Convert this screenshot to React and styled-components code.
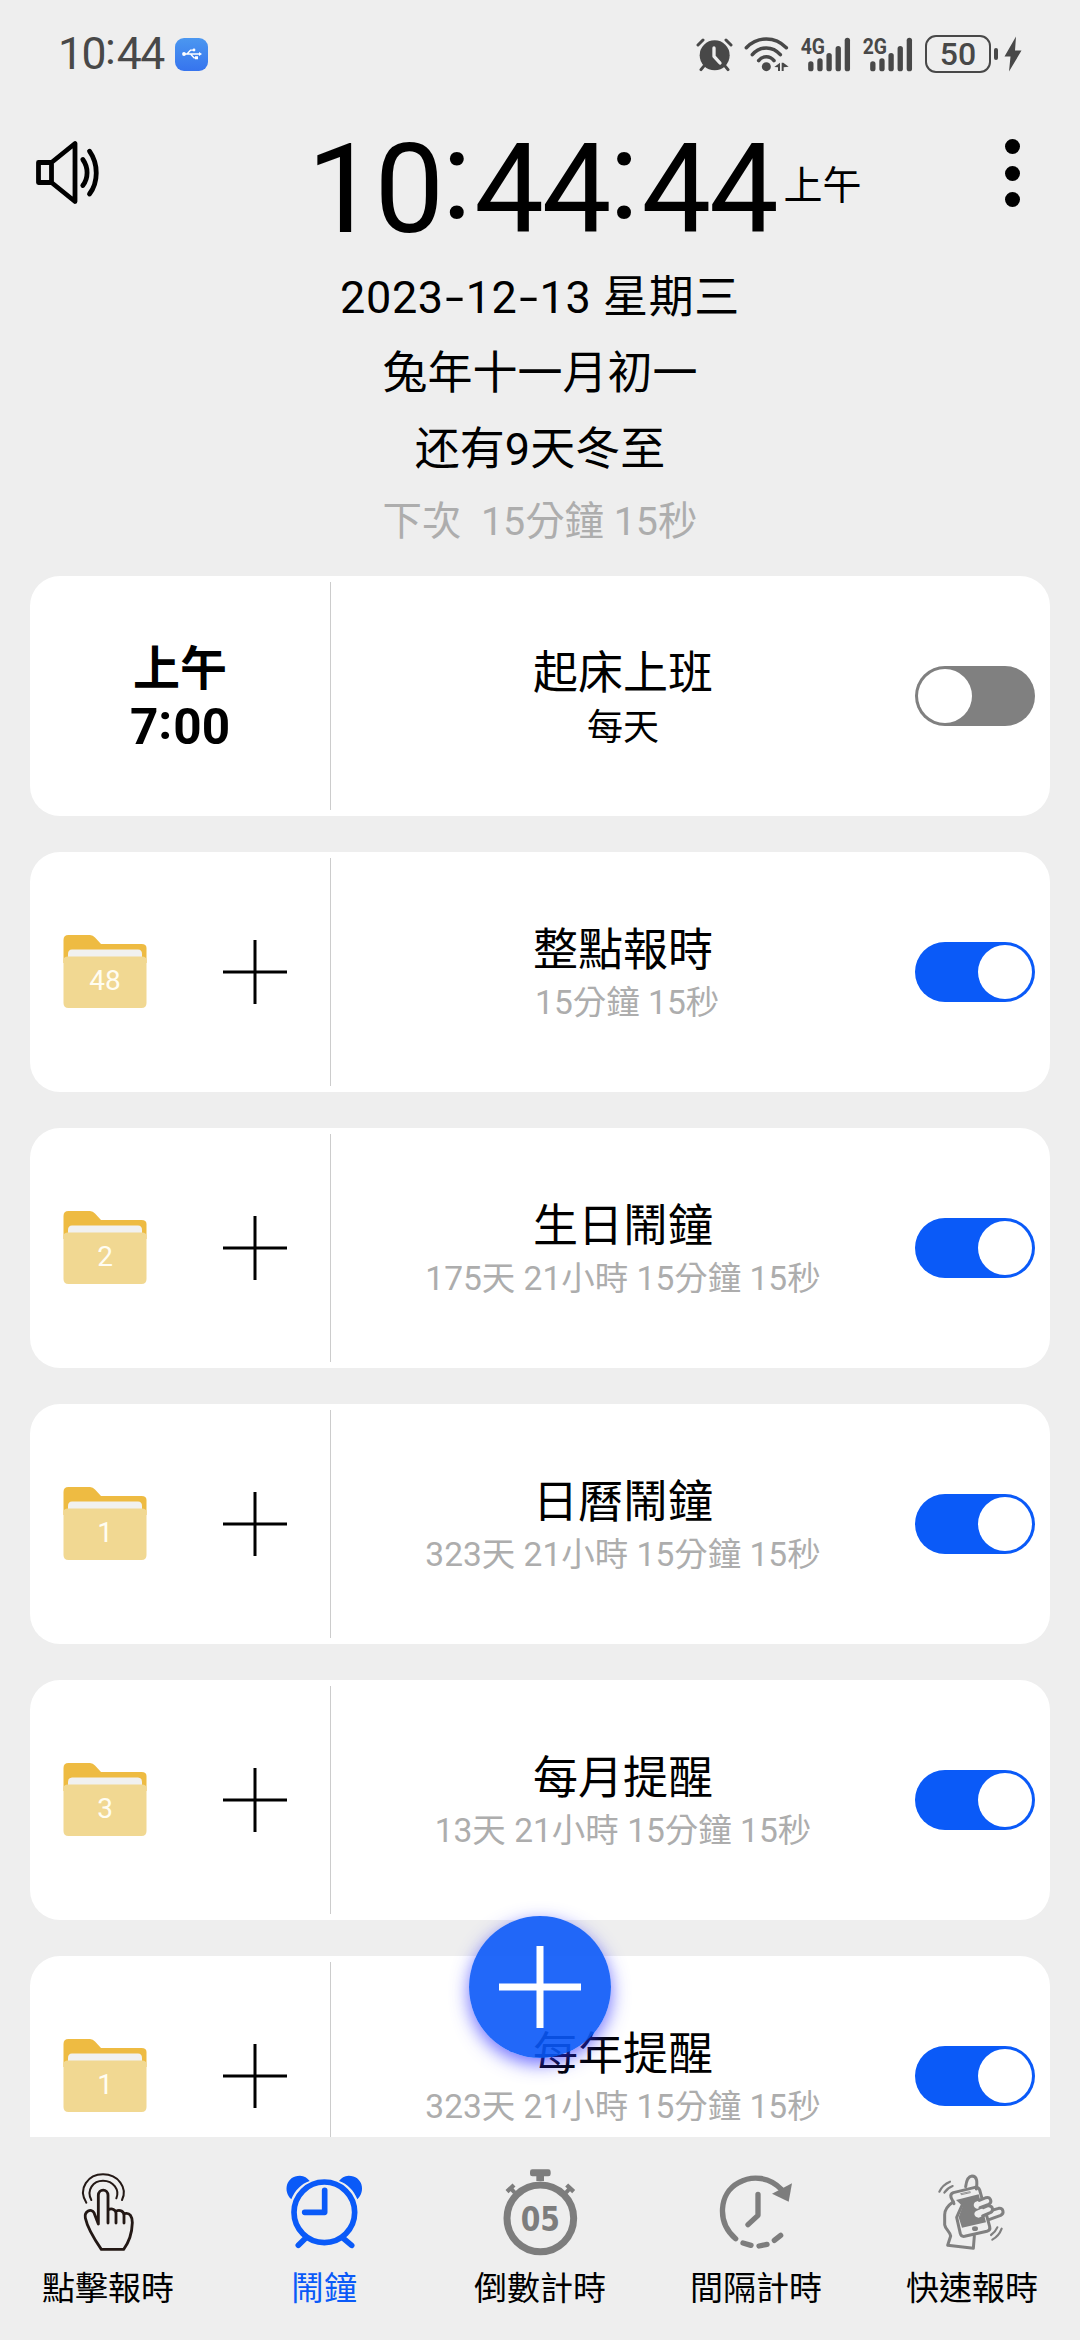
import React from "react";
import styled, { createGlobalStyle } from "styled-components";

const GlobalStyle = createGlobalStyle`
  * {
    box-sizing: border-box;
  }

  body {
    margin: 0;
    background-color: #eee;
    font-family: Roboto, "Noto Sans CJK TC", sans-serif;
    color: #000;
  }
`;

const Screen = styled.div`
  width: 1080px;
  height: 2340px;
  display: flex;
  flex-direction: column;
  overflow: hidden;
  background-color: #eee;
`;

/* status bar */

const StatusBar = styled.div`
  height: 106px;
  flex: none;
  display: flex;
  align-items: center;
  padding: 2px 58px 0 58px;
  color: #484848;
`;

const StatusTime = styled.span`
  width: 117px;
  font-size: 44.5px;
  line-height: 52px;
  letter-spacing: -1.5px;
  white-space: nowrap;
`;

const UsbBadge = styled.span`
  width: 33px;
  height: 33px;
  border-radius: 9px;
  display: flex;
  align-items: center;
  justify-content: center;
  background: linear-gradient(#4b97f0, #3674ee);
`;

const StatusIcons = styled.div`
  margin-left: auto;
  display: flex;
  align-items: center;
  gap: 11px;
`;

const Power = styled.div`
  display: flex;
  align-items: center;
  margin-left: 1px;
`;

const Battery = styled.span`
  width: 66px;
  height: 38px;
  border: 2.5px solid #484848;
  border-radius: 11px;
  font-size: 32px;
  font-weight: 500;
  line-height: 34px;
  text-align: center;
`;

const BatteryTip = styled.span`
  width: 4px;
  height: 12px;
  margin: 0 6px 0 3px;
  border-radius: 2px;
  background-color: #484848;
`;

/* header */

const Header = styled.header`
  height: 144px;
  flex: none;
  display: flex;
  padding: 0 60px 0 34px;
`;

const SpeakerSlot = styled.div`
  width: 273px;
  padding-top: 34px;
`;

const Clock = styled.div`
  display: flex;
  align-items: center;
  height: 140px;
  padding-top: 28px;
`;

const ClockDigits = styled.span`
  font-size: 124px;
  line-height: 112px;
  letter-spacing: -2.3px;
  white-space: nowrap;
`;

const Meridiem = styled.span`
  margin: -9px 0 0 7px;
  font-size: 39px;
  line-height: 46px;
`;

const MenuDots = styled.div`
  margin-left: auto;
  padding-top: 33px;
  display: flex;
  flex-direction: column;
  gap: 11.5px;
`;

const Dot = styled.span`
  width: 15px;
  height: 15px;
  border-radius: 50%;
  background-color: #000;
`;

const DateBlock = styled.div`
  height: 326px;
  flex: none;
  padding-top: 10px;
  text-align: center;
`;

const DateLine = styled.p`
  margin: 0;
  height: 76px;
  font-size: 45px;
  line-height: 76px;
  letter-spacing: ${(props) => (props.$wide ? "0.6px" : "normal")};
  white-space: pre;
`;

const NextLine = styled(DateLine)`
  height: 68px;
  font-size: 39.4px;
  line-height: 68px;
  color: #adadad;
`;

const Colon = styled.span`
  position: relative;
  top: -0.11em;
  letter-spacing: 0.02em;
`;

const Hyphen = styled.span`
  display: inline-block;
  width: 0.49em;
  transform: scaleX(1.5);
`;

/* alarm list */

const List = styled.main`
  height: 1561px;
  flex: none;
  overflow: hidden;
  padding: 0 30px;
  display: flex;
  flex-direction: column;
  gap: 36px;
`;

const Card = styled.section`
  height: 240px;
  flex: none;
  display: flex;
  padding: 6px 15px 6px 0;
  border-radius: 30px;
  background-color: #fff;
`;

const CardLeft = styled.div`
  width: 301px;
  flex: none;
  display: grid;
  grid-template-columns: ${(props) => (props.$split ? "1fr 1fr" : "1fr")};
  align-items: center;
  justify-items: center;
  border-right: 1px solid #ccc;
`;

const AlarmTime = styled.div`
  display: flex;
  flex-direction: column;
  align-items: center;
  padding-top: 4px;
  font-size: 49.5px;
  font-weight: 700;
  line-height: 58px;
`;

const AlarmMeridiem = styled.span`
  font-size: 47px;
`;

const CardBody = styled.div`
  flex: 1;
  display: flex;
  flex-direction: column;
  align-items: center;
  padding-top: ${(props) => (props.$strong ? 62 : 63)}px;
`;

const CardTitle = styled.span`
  font-size: 45px;
  line-height: 60px;
`;

const CardSub = styled.span`
  font-size: ${(props) => (props.$strong ? 36 : 33.5)}px;
  line-height: ${(props) => (props.$strong ? 48 : 44)}px;
  color: ${(props) => (props.$strong ? "#000" : "#adadad")};
  white-space: pre;
`;

const Toggle = styled.span`
  align-self: center;
  width: 120px;
  height: 60px;
  padding: 3px;
  border-radius: 30px;
  display: flex;
  justify-content: ${(props) => (props.$on ? "flex-end" : "flex-start")};
  background-color: ${(props) => (props.$on ? "#0a5af8" : "#808080")};
`;

const Knob = styled.span`
  width: 54px;
  height: 54px;
  border-radius: 50%;
  background-color: #fff;
`;

const FolderBox = styled.span`
  display: grid;
  place-items: center;
  padding-bottom: 3px;

  > * {
    grid-area: 1 / 1;
  }
`;

const FolderCount = styled.span`
  padding-top: 20px;
  font-size: 28px;
  line-height: 32px;
  color: #fffdf2;
`;

/* floating button, lies over the list */

const AddButton = styled.button`
  position: absolute;
  top: 1916px;
  left: 469px;
  width: 142px;
  height: 142px;
  padding: 0;
  border: 0;
  border-radius: 50%;
  display: flex;
  align-items: center;
  justify-content: center;
  background-color: rgba(10, 88, 248, 0.9);
  box-shadow: 0 6px 18px rgba(50, 50, 255, 0.7);
`;

/* bottom tabs */

const Tabs = styled.nav`
  flex: 1;
  display: grid;
  grid-template-columns: repeat(5, 216px);
  padding-top: 30px;
`;

const Tab = styled.div`
  display: flex;
  flex-direction: column;
  align-items: center;
  gap: 9px;
  font-size: 33px;
  line-height: 46px;
  color: ${(props) => (props.$active ? "#0a5af8" : "#000")};
`;

function Numeral({ text }) {
  return text.split(/([:-])/).map((part, i) => {
    if (part === ":") return <Colon key={i}>:</Colon>;
    if (part === "-") return <Hyphen key={i}>-</Hyphen>;
    return part;
  });
}

const UsbIcon = () => (
  <svg width="20" height="12" viewBox="0 0 20 12" fill="none" stroke="#fff">
    <path d="M2 6H18M5 6L8.5 2.2H11M8.5 6L12 9.8H14.5" strokeWidth="1.3" />
    <circle cx="2" cy="6" r="1.9" fill="#fff" stroke="none" />
    <circle cx="12" cy="2" r="1.4" fill="#fff" stroke="none" />
    <path d="M13 8.2H16V11.2H13ZM17 4L20 6L17 8Z" fill="#fff" stroke="none" />
  </svg>
);

const StatusAlarmIcon = () => (
  <svg width="37" height="35" viewBox="17 18 111 105" fill="none" stroke="#484848" strokeLinecap="round">
    <circle cx="73" cy="73" r="45" fill="#484848" stroke="none" />
    <path d="M23 42L38 27M107 27L122 42M40 106L32 116M105 106L113 116" strokeWidth="9" />
    <path d="M71 51V76L89 96" stroke="#eee" strokeWidth="10" strokeLinejoin="round" />
  </svg>
);

const WifiIcon = () => (
  <svg width="45" height="35" viewBox="161 18 135 105" fill="none" stroke="#484848" strokeWidth="10.5" strokeLinecap="round">
    <path d="M168 50C202 15 254 15 288 50M186 71C209 44 247 44 270 71M205 89C217 73 239 73 251 89" />
    <circle cx="228" cy="107" r="13.5" fill="#484848" stroke="none" />
    <path d="M252 108L269 95V120H263V109ZM274 95H279L295 107L280 109V120H274Z" fill="#484848" stroke="none" />
  </svg>
);

const SignalIcon = ({ label }) => (
  <svg width="51" height="47" viewBox="329 0 153 141" fill="#484848">
    <text x="331" y="68" fontSize="65" fontWeight="700" fontFamily="Roboto, sans-serif" textLength="73" lengthAdjust="spacingAndGlyphs">
      {label}
    </text>
    {[91, 82, 66, 45, 20].map((top, i) => (
      <rect key={top} x={353.5 + i * 27.4} y={top} width="16" height={121 - top} rx="8" />
    ))}
  </svg>
);

const BoltIcon = () => (
  <svg width="18" height="36" viewBox="0 0 18 36" fill="#484848">
    <path d="M12 0.5L0.5 20.5H6.5L5 35.5L17.5 14.5H11Z" />
  </svg>
);

const SpeakerIcon = () => (
  <svg width="66" height="66" viewBox="34 140 66 66" fill="none" stroke="#000" strokeWidth="4.8" strokeLinecap="round" strokeLinejoin="round">
    <path d="M38.5 162.5H51.5V182.5H38.5ZM51.5 162.5L75 143.5V201.5L51.5 182.5" />
    <path d="M82.8 159.5C88.5 167.5 88.5 178 82.8 185.5M89.5 151.2C98.5 164 98.5 182 89.5 194" />
  </svg>
);

const FolderIcon = () => (
  <svg width="84" height="76" viewBox="0 0 84 76">
    <path d="M0.5 30V7Q0.5 2 5.5 2H27Q30 2 32 4.5L38 11H78.5Q83.5 11 83.5 15V30Z" fill="#eebb42" />
    <path d="M5 26V21Q5 16.5 9 16.5H75Q79 16.5 79 21V26Z" fill="#f1f1f0" />
    <path d="M5 23.5H79Q83.5 23.5 83.5 27V70Q83.5 75 78.5 75H5.5Q0.5 75 0.5 70V27Q0.5 23.5 5 23.5Z" fill="#f1d892" />
  </svg>
);

const PlusIcon = ({ size, weight, color }) => (
  <svg width={size} height={size} viewBox={`0 0 ${size} ${size}`} stroke={color} strokeWidth={weight}>
    <path d={`M0 ${size / 2}H${size}M${size / 2} 0V${size}`} />
  </svg>
);

const TapIcon = () => (
  <svg width="84" height="90" viewBox="198 111 252 270" fill="none" stroke="#231815" strokeLinecap="round" strokeLinejoin="round">
    <path d="M259 218C232 175 265 133 309 133C354 133 384 173 366 210" strokeWidth="6" />
    <path d="M274 210C258 180 280 152 309 152C340 152 360 180 349 205" strokeWidth="6" />
    <path d="M295 282V196C295 175 324 175 324 196V279M324 240C336 232 348 240 348 250V279M348 244C360 236 372 246 372 256V279M373 251C390 246 397 260 397 278C396 308 386 338 371 358H304C286 332 262 292 256 264C252 244 274 234 282 248L295 282" strokeWidth="8.5" />
  </svg>
);

const AlarmIcon = () => (
  <svg width="84" height="90" viewBox="846 111 252 270" fill="none" stroke="#0a5af8" strokeWidth="17" strokeLinecap="round" strokeLinejoin="round">
    <circle cx="973" cy="247" r="91" />
    <path d="M974 181V247H914M915 326L895 346M1031 326L1055 346" />
    <path
      d="M874 208C848 184 858 137 900 137C913 137 922 144 929 153C903 162 885 181 874 208ZM1072 208C1098 184 1088 137 1046 137C1033 137 1024 144 1017 153C1043 162 1061 181 1072 208Z"
      fill="#0a5af8"
      stroke="none"
    />
  </svg>
);

const StopwatchIcon = () => (
  <svg width="84" height="90" viewBox="414 111 252 270" fill="none" stroke="#7d7d7d">
    <circle cx="541" cy="265" r="100" strokeWidth="21" />
    <path d="M510 125Q510 118 517 118H565Q572 118 572 125V132Q572 139 565 139H552V153H529V139H517Q510 139 510 132Z" fill="#7d7d7d" stroke="none" />
    <path d="M441 185L462 165M641 185L620 165" strokeWidth="13" />
    <path d="M453 176L464 188M629 176L618 188" strokeWidth="12" />
    <text
      x="482"
      y="302"
      fontSize="101"
      fontWeight="700"
      fontFamily="'DejaVu Sans', sans-serif"
      textLength="118"
      lengthAdjust="spacingAndGlyphs"
      fill="#7d7d7d"
      stroke="none"
    >
      05
    </text>
  </svg>
);

const IntervalIcon = () => (
  <svg width="84" height="90" viewBox="-18 111 252 270" fill="none" stroke="#7d7d7d" strokeWidth="16" strokeLinecap="round" strokeLinejoin="round">
    <path d="M47 326C-10 278 -4 190 56 158C98 134 150 142 184 178" />
    <path d="M69 339L93 346M117 348L141 343M163 331L182 316" />
    <path d="M114 193V256L84 284" />
    <path d="M156 191L216 160L206 215Z" fill="#7d7d7d" stroke="none" />
  </svg>
);

const ShakeIcon = () => (
  <svg width="84" height="90" viewBox="0 -3 252 270" fill="none" stroke="#808080" strokeWidth="9" strokeLinecap="round" strokeLinejoin="round">
    <path d="M28 71Q38 50 60 41M43 74Q52 60 68 54M187 215Q207 204 215 182M183 201Q196 192 202 178" strokeWidth="6.5" />
    <path d="M107 56C109 38 114 25 126 24C142 24 142 42 139 63" />
    <path d="M70 101C54 112 44 124 44 140V170C46 184 60 190 62 204L53 232L130 241L133 204" />
    <path d="M72 107L63 88Q60 78 70 74L135 58Q145 56 149 66L179 176Q182 187 171 190L104 205Q94 207 91 197L80 148L96 112" />
    <path d="M78 96L146 79L168 163L96 179L86 148L98 115Z" fill="#808080" stroke="none" />
    <path d="M92 77L120 71M94 80L121 74" strokeWidth="2.5" />
    <ellipse cx="135" cy="182" rx="9" ry="7" fill="#808080" stroke="none" />
    <path d="M178 129L206 121C220 119 224 136 212 142L177 155" fill="#eee" />
    <path d="M136 102L168 89C182 86 188 103 176 109L143 122C130 122 128 107 136 102Z" fill="#eee" stroke="none" />
    <path d="M139 129L174 113C189 112 192 128 181 134L146 149C132 148 129 134 139 129Z" fill="#eee" stroke="none" />
    <path d="M148 97L168 89C182 86 188 103 176 109L150 119M160 119L174 113C189 112 192 128 181 134L158 144" />
  </svg>
);

const alarms = [
  { title: "起床上班", sub: "每天", time: "7:00", on: false },
  { title: "整點報時", sub: " 15分鐘 15秒", count: 48, on: true },
  { title: "生日鬧鐘", sub: "175天 21小時 15分鐘 15秒", count: 2, on: true },
  { title: "日曆鬧鐘", sub: "323天 21小時 15分鐘 15秒", count: 1, on: true },
  { title: "每月提醒", sub: "13天 21小時 15分鐘 15秒", count: 3, on: true },
  { title: "每年提醒", sub: "323天 21小時 15分鐘 15秒", count: 1, on: true },
];

const tabs = [
  { label: "點擊報時", Icon: TapIcon },
  { label: "鬧鐘", Icon: AlarmIcon, active: true },
  { label: "倒數計時", Icon: StopwatchIcon },
  { label: "間隔計時", Icon: IntervalIcon },
  { label: "快速報時", Icon: ShakeIcon },
];

function AlarmCard({ alarm }) {
  return (
    <Card>
      {alarm.time ? (
        <CardLeft>
          <AlarmTime>
            <AlarmMeridiem>上午</AlarmMeridiem>
            <span>
              <Numeral text={alarm.time} />
            </span>
          </AlarmTime>
        </CardLeft>
      ) : (
        <CardLeft $split>
          <FolderBox>
            <FolderIcon />
            <FolderCount>{alarm.count}</FolderCount>
          </FolderBox>
          <PlusIcon size={64} weight={3} color="#000" />
        </CardLeft>
      )}
      <CardBody $strong={!!alarm.time}>
        <CardTitle>{alarm.title}</CardTitle>
        <CardSub $strong={!!alarm.time}>{alarm.sub}</CardSub>
      </CardBody>
      <Toggle $on={alarm.on}>
        <Knob />
      </Toggle>
    </Card>
  );
}

function App() {
  return (
    <Screen>
      <GlobalStyle />
      <StatusBar>
        <StatusTime>
          <Numeral text="10:44" />
        </StatusTime>
        <UsbBadge>
          <UsbIcon />
        </UsbBadge>
        <StatusIcons>
          <StatusAlarmIcon />
          <WifiIcon />
          <SignalIcon label="4G" />
          <SignalIcon label="2G" />
          <Power>
            <Battery>50</Battery>
            <BatteryTip />
            <BoltIcon />
          </Power>
        </StatusIcons>
      </StatusBar>
      <Header>
        <SpeakerSlot>
          <SpeakerIcon />
        </SpeakerSlot>
        <Clock>
          <ClockDigits>
            <Numeral text="10:44:44" />
          </ClockDigits>
          <Meridiem>上午</Meridiem>
        </Clock>
        <MenuDots>
          <Dot />
          <Dot />
          <Dot />
        </MenuDots>
      </Header>
      <DateBlock>
        <DateLine $wide>
          <Numeral text="2023-12-13 星期三" />
        </DateLine>
        <DateLine>兔年十一月初一</DateLine>
        <DateLine>还有9天冬至</DateLine>
        <NextLine>下次  15分鐘 15秒</NextLine>
      </DateBlock>
      <List>
        {alarms.map((alarm) => (
          <AlarmCard key={alarm.title} alarm={alarm} />
        ))}
      </List>
      <Tabs>
        {tabs.map(({ label, Icon, active }) => (
          <Tab key={label} $active={active}>
            <Icon />
            <span>{label}</span>
          </Tab>
        ))}
      </Tabs>
      <AddButton>
        <PlusIcon size={82} weight={7} color="#fff" />
      </AddButton>
    </Screen>
  );
}

export default App;
